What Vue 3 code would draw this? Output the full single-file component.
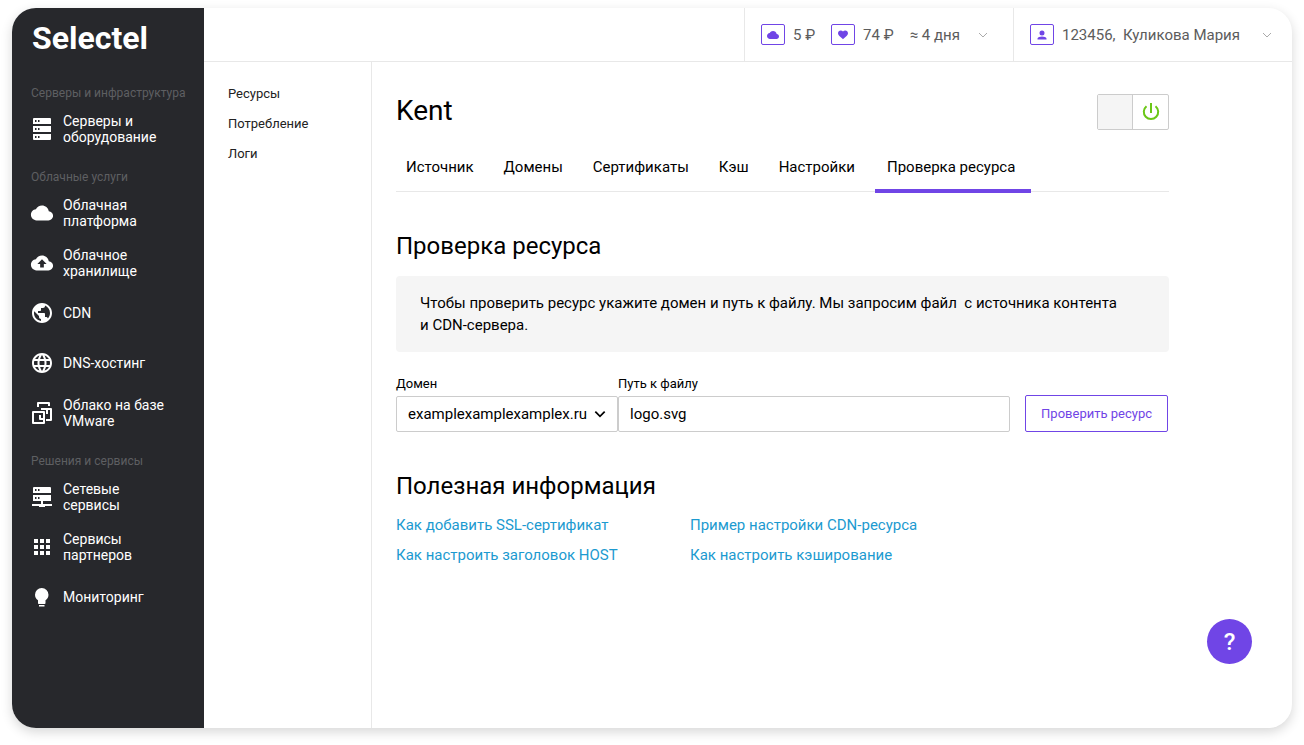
<template>
  <div class="page">
    <div class="window">
      <aside class="sidebar">
        <a class="logo" href="#">Selectel</a>
        <nav v-for="group in menu" :key="group.title" class="group">
          <h2 class="group-title">{{ group.title }}</h2>
          <a v-for="item in group.items" :key="item.icon" class="menu-item" href="#">
            <svg class="menu-icon" :viewBox="item.box || '0 0 24 24'" aria-hidden="true">
              <path :d="icons[item.icon]" fill-rule="evenodd" />
            </svg>
            <span class="menu-text">{{ item.text }}</span>
          </a>
        </nav>
      </aside>

      <div class="body">
        <header class="topbar">
          <button class="top-button balance" type="button">
            <span class="badge">
              <svg viewBox="0 0 24 24" aria-hidden="true"><path :d="icons.cloud" /></svg>
            </span>
            <span>5 ₽</span>
            <span class="badge second">
              <svg viewBox="0 0 24 24" aria-hidden="true"><path :d="icons.heart" /></svg>
            </span>
            <span>74 ₽</span>
            <span class="days">≈ 4 дня</span>
            <svg class="chevron" viewBox="0 0 10 10" aria-hidden="true"><path d="M1 3l4 4 4-4" /></svg>
          </button>
          <button class="top-button account" type="button">
            <span class="badge">
              <svg viewBox="0 0 24 24" aria-hidden="true"><path :d="icons.person" /></svg>
            </span>
            <span class="user">123456,&nbsp; Куликова Мария</span>
            <svg class="chevron" viewBox="0 0 10 10" aria-hidden="true"><path d="M1 3l4 4 4-4" /></svg>
          </button>
        </header>

        <div class="columns">
          <nav class="subnav">
            <a v-for="link in subnav" :key="link" href="#">{{ link }}</a>
          </nav>

          <main class="content">
            <div class="title-row">
              <h1>Kent</h1>
              <button
                class="power"
                :class="{ off: !enabled }"
                type="button"
                role="switch"
                :aria-checked="enabled"
                aria-label="Включить ресурс"
                @click="enabled = !enabled"
              >
                <span class="power-empty"></span>
                <span class="power-on">
                  <svg viewBox="0 0 20 20" aria-hidden="true">
                    <path d="M10 1v10M5.500 4.200a7.200 7.200 0 1 0 9 0" />
                  </svg>
                </span>
              </button>
            </div>

            <nav class="tabs">
              <a
                v-for="tab in tabs"
                :key="tab"
                href="#"
                :class="{ active: tab === activeTab }"
                @click.prevent="activeTab = tab"
              >{{ tab }}</a>
            </nav>

            <h2 class="section-title">Проверка ресурса</h2>
            <p class="hint">
              Чтобы проверить ресурс укажите домен и путь к файлу. Мы запросим файл&nbsp; с источника контента и&nbsp;CDN-сервера.
            </p>

            <form class="check-form" @submit.prevent>
              <div class="field">
                <label for="domain">Домен</label>
                <div class="select-wrap">
                  <select id="domain" v-model="domain">
                    <option>examplexamplexamplex.ru</option>
                  </select>
                  <svg viewBox="0 0 12 12" aria-hidden="true"><path d="M2 4l4 4 4-4" /></svg>
                </div>
              </div>
              <div class="field path-field">
                <label for="path">Путь к файлу</label>
                <input id="path" v-model="path" type="text" />
              </div>
              <button class="check-button" type="submit">Проверить ресурс</button>
            </form>

            <h2 class="section-title">Полезная информация</h2>
            <div class="links">
              <a v-for="link in links" :key="link" href="#">{{ link }}</a>
            </div>
          </main>
        </div>

        <button class="help" type="button" aria-label="Помощь">?</button>
      </div>
    </div>
  </div>
</template>

<script setup>
import { ref } from 'vue'

const enabled = ref(true)
const activeTab = ref('Проверка ресурса')
const domain = ref('examplexamplexamplex.ru')
const path = ref('logo.svg')

const subnav = ['Ресурсы', 'Потребление', 'Логи']
const tabs = ['Источник', 'Домены', 'Сертификаты', 'Кэш', 'Настройки', 'Проверка ресурса']
const links = [
  'Как добавить SSL-сертификат',
  'Пример настройки CDN-ресурса',
  'Как настроить заголовок HOST',
  'Как настроить кэширование'
]

const menu = [
  {
    title: 'Серверы и инфраструктура',
    items: [{ icon: 'servers', text: 'Серверы и\nоборудование' }]
  },
  {
    title: 'Облачные услуги',
    items: [
      { icon: 'cloud', text: 'Облачная\nплатформа', box: '-1 -1 26 26' },
      { icon: 'upload', text: 'Облачное\nхранилище', box: '-1 -1 26 26' },
      { icon: 'earth', text: 'CDN' },
      { icon: 'globe', text: 'DNS-хостинг' },
      { icon: 'vmware', text: 'Облако на базе\nVMware' }
    ]
  },
  {
    title: 'Решения и сервисы',
    items: [
      { icon: 'network', text: 'Сетевые\nсервисы' },
      { icon: 'apps', text: 'Сервисы\nпартнеров' },
      { icon: 'bulb', text: 'Мониторинг' }
    ]
  }
]

const cloudShape = 'M19.35 10.04C18.67 6.59 15.64 4 12 4 9.11 4 6.6 5.64 5.35 8.04 2.34 8.36 0 10.91 0 14c0 3.31 2.69 6 6 6h13c2.76 0 5-2.24 5-5 0-2.64-2.05-4.78-4.65-4.96z'

const icons = {
  servers:
    'M4 1h16a1 1 0 0 1 1 1v5H3V2a1 1 0 0 1 1-1zM5 3v2h1.500V3zM8 3v2h1.500V3zM3 9h18v6H3zM5 11v2h1.500v-2zM8 11v2h1.500v-2zM3 17h18v5a1 1 0 0 1-1 1H4a1 1 0 0 1-1-1zM5 19v2h1.500v-2zM8 19v2h1.500v-2z',
  cloud: cloudShape,
  upload: cloudShape + 'M14 13v4h-4v-4H7l5-5 5 5z',
  earth:
    'M12 2C6.48 2 2 6.48 2 12s4.48 10 10 10 10-4.48 10-10S17.52 2 12 2zm-1 17.93c-3.95-.49-7-3.85-7-7.93 0-.62.08-1.21.21-1.79L9 15v1c0 1.1.9 2 2 2v1.93zm6.9-2.54c-.26-.81-1-1.39-1.9-1.39h-1v-3c0-.55-.45-1-1-1H8v-2h2c.55 0 1-.45 1-1V7h2c1.1 0 2-.9 2-2v-.41c2.93 1.19 5 4.06 5 7.41 0 2.08-.8 3.97-2.1 5.39z',
  globe:
    'M11.99 2C6.47 2 2 6.48 2 12s4.47 10 9.99 10C17.52 22 22 17.52 22 12S17.52 2 11.99 2zm6.93 6h-2.95c-.32-1.25-.78-2.45-1.38-3.56 1.84.63 3.37 1.91 4.33 3.56zM12 4.04c.83 1.2 1.48 2.53 1.91 3.96h-3.82c.43-1.43 1.08-2.76 1.91-3.96zM4.26 14C4.1 13.36 4 12.69 4 12s.1-1.36.26-2h3.38c-.08.66-.14 1.32-.14 2s.06 1.34.14 2H4.26zm.82 2h2.95c.32 1.25.78 2.45 1.38 3.56-1.84-.63-3.37-1.9-4.33-3.56zm2.95-8H5.08c.96-1.66 2.49-2.93 4.33-3.56C8.81 5.55 8.35 6.75 8.03 8zM12 19.96c-.83-1.2-1.48-2.53-1.91-3.96h3.82c-.43 1.43-1.08 2.76-1.91 3.96zM14.34 14H9.66c-.09-.66-.16-1.32-.16-2s.07-1.35.16-2h4.68c.09.65.16 1.32.16 2s-.07 1.34-.16 2zm.25 5.56c.6-1.11 1.06-2.31 1.38-3.56h2.95c-.96 1.65-2.49 2.93-4.33 3.56zM16.36 14c.08-.66.14-1.32.14-2s-.06-1.34-.14-2h3.38c.16.64.26 1.31.26 2s-.1 1.36-.26 2h-3.38z',
  vmware:
    'M8 1h11a1 1 0 0 1 1 1v3h-2V3H9v3H7V2a1 1 0 0 1 1-1zM11 7h10a1 1 0 0 1 1 1v11a1 1 0 0 1-1 1h-5v-2h4V9h-2v4h-2V9h-5zM3 10h11a1 1 0 0 1 1 1v11a1 1 0 0 1-1 1H3a1 1 0 0 1-1-1V11a1 1 0 0 1 1-1zM4 12v9h9v-2h-3a1 1 0 0 1-1-1v-4h2v3h2v-5z',
  network:
    'M4 2h16a1 1 0 0 1 1 1v5H3V3a1 1 0 0 1 1-1zM5 4v2h1.500V4zM8 4v2h1.500V4zM3 10h18v6h-8v3h9v2h-7v1H9v-1H2v-2h9v-3H3zM5 12v2h1.500v-2zM8 12v2h1.500v-2z',
  apps:
    'M4 8h4V4H4v4zm6 12h4v-4h-4v4zm-6 0h4v-4H4v4zm0-6h4v-4H4v4zm6 0h4v-4h-4v4zm6-10v4h4V4h-4zm-6 4h4V4h-4v4zm6 6h4v-4h-4v4zm0 6h4v-4h-4v4z',
  bulb:
    'M9 21.500h5.500V20H9zM11.700 3a6.700 6.700 0 0 0-6.700 6.700c0 2.300 1.200 4.300 3 5.500V18c0 .6.400 1 1 1h5.500c.6 0 1-.4 1-1v-2.800c1.800-1.200 3-3.200 3-5.500A6.700 6.700 0 0 0 11.700 3z',
  heart:
    'M12 20.500l-1.450-1.320C5.400 14.700 2 12 2 8.500 2 5.420 4.420 3 7.500 3c1.740 0 3.410.81 4.500 2.090C13.090 3.810 14.760 3 16.500 3 19.580 3 22 5.420 22 8.500c0 3.500-3.400 6.200-8.550 10.680z',
  person:
    'M12 13a5 5 0 1 0 0-10 5 5 0 0 0 0 10zM12 15c-4 0-9 1.500-9 4v2h18v-2c0-2.500-5-4-9-4z'
}
</script>

<style>
body {
  margin: 0;
}
</style>

<style scoped>
* {
  box-sizing: border-box;
}

.page {
  display: flex;
  min-height: 100vh;
  padding: 8px 12px 17px;
  background: #fff;
  font-family: Roboto, "Noto Sans", sans-serif;
  font-size: 15px;
  color: #000;
}

.window {
  display: flex;
  flex: 1;
  border-radius: 24px;
  background: #fff;
  box-shadow: 0 4px 12px rgba(0, 0, 0, 0.16);
  overflow: hidden;
}

a {
  color: inherit;
  text-decoration: none;
}

h1,
h2,
p {
  margin: 0;
  font-weight: 400;
}

button,
select,
input {
  margin: 0;
  font: inherit;
  color: inherit;
}

button {
  cursor: pointer;
}

/* left menu */
.sidebar {
  flex: none;
  width: 192px;
  background: #27282c;
  color: #fff;
}

.logo {
  display: block;
  padding: 10px 20px 20px;
  font-size: 32px;
  font-weight: 700;
  line-height: 40px;
}

.group-title {
  padding: 15px 0 3px 19px;
  font-size: 12px;
  line-height: 16px;
  color: #5e5f62;
  white-space: nowrap;
}

.logo + .group .group-title {
  padding-top: 7px;
}

.menu-item {
  display: flex;
  align-items: center;
  gap: 9px;
  height: 50px;
  padding-left: 18px;
}

.menu-icon {
  flex: none;
  width: 24px;
  height: 24px;
  fill: #fff;
}

.menu-text {
  font-size: 14px;
  line-height: 16px;
  white-space: pre-line;
}

/* right part */
.body {
  position: relative;
  display: flex;
  flex: 1;
  flex-direction: column;
}

.topbar {
  display: flex;
  justify-content: flex-end;
  height: 54px;
  border-bottom: 1px solid #e8e8e8;
}

.top-button {
  display: flex;
  align-items: center;
  padding: 0 16px;
  border: 0;
  border-left: 1px solid #e8e8e8;
  background: none;
  font-size: 15px;
  color: #5c5c5c;
}

.balance {
  width: 269px;
}

.account {
  width: 279px;
}

.badge {
  display: flex;
  align-items: center;
  justify-content: center;
  width: 24px;
  height: 21px;
  margin-right: 8px;
  border: 1px solid #7045e6;
  border-radius: 2px;
}

.badge svg {
  width: 12px;
  height: 12px;
  fill: #7045e6;
}

.second,
.days {
  margin-left: 16px;
}

.chevron {
  width: 10px;
  height: 10px;
  margin-left: auto;
  fill: none;
  stroke: #aaa;
}

.balance .chevron {
  margin-right: 9px;
}

.account .chevron {
  margin-right: 4px;
}

.columns {
  display: flex;
  flex: 1;
}

.subnav {
  display: flex;
  flex: none;
  flex-direction: column;
  gap: 14px;
  width: 168px;
  padding: 24px;
  border-right: 1px solid #e8e8e8;
  font-size: 13px;
  line-height: 16px;
  color: #222;
}

.content {
  flex: 1;
  max-width: 821px;
  padding: 32px 24px;
}

.title-row {
  display: flex;
  justify-content: space-between;
}

h1 {
  font-size: 28px;
  line-height: 34px;
}

.power {
  display: flex;
  width: 72px;
  height: 36px;
  padding: 0;
  border: 1px solid #ccc;
  border-radius: 2px;
  background: #fff;
}

.power-empty {
  width: 35px;
  height: 34px;
  border-right: 1px solid #ccc;
  background: #f5f5f5;
}

.power-on {
  display: flex;
  flex: 1;
  align-items: center;
  justify-content: center;
  height: 34px;
}

.power svg {
  width: 20px;
  height: 20px;
  fill: none;
  stroke: #6bc717;
  stroke-width: 2;
}

.power.off {
  flex-direction: row-reverse;
}

.tabs {
  display: flex;
  gap: 30px;
  margin-top: 12px;
  padding-left: 10px;
  border-bottom: 1px solid #e8e8e8;
  line-height: 50px;
  white-space: nowrap;
}

.tabs a {
  height: 49px;
}

.tabs .active {
  height: 51px;
  margin: 0 0 -2px -10px;
  padding: 0 16px 0 12px;
  border-bottom: 4px solid #7045e6;
}

.section-title {
  margin-top: 38px;
  font-size: 24px;
  line-height: 32px;
}

.hint {
  margin-top: 14px;
  padding: 16px 24px;
  border-radius: 4px;
  background: #f5f5f5;
  line-height: 22px;
}

.check-form {
  display: flex;
  align-items: flex-end;
  margin-top: 24px;
  padding-right: 1px;
}

.field {
  display: flex;
  flex-direction: column;
  gap: 4px;
}

.field label {
  font-size: 13px;
  line-height: 16px;
}

.path-field {
  flex: 1;
}

.select-wrap {
  display: grid;
  align-items: center;
}

.select-wrap select,
.select-wrap svg {
  grid-area: 1 / 1;
}

.select-wrap svg {
  justify-self: end;
  width: 14px;
  height: 14px;
  margin-right: 11px;
  fill: none;
  stroke: #000;
  stroke-width: 1.5;
  pointer-events: none;
}

select,
input {
  width: 100%;
  height: 36px;
  padding: 0 11px;
  border: 1px solid #ccc;
  border-radius: 2px;
  background: #fff;
  appearance: none;
}

select {
  width: 222px;
}

.check-button {
  height: 37px;
  margin-left: 15px;
  padding: 0 15px;
  border: 1px solid #7045e6;
  border-radius: 2px;
  background: #fff;
  font-size: 13px;
  color: #7045e6;
}

.links {
  display: grid;
  grid-template-columns: 294px 1fr;
  row-gap: 8px;
  margin-top: 12px;
  line-height: 22px;
  color: #1c9ad0;
}

.help {
  position: absolute;
  right: 40px;
  bottom: 64px;
  width: 45px;
  height: 45px;
  padding: 0;
  border: 0;
  border-radius: 50%;
  background: #7045e6;
  font-size: 24px;
  font-weight: 500;
  color: #fff;
}
</style>
